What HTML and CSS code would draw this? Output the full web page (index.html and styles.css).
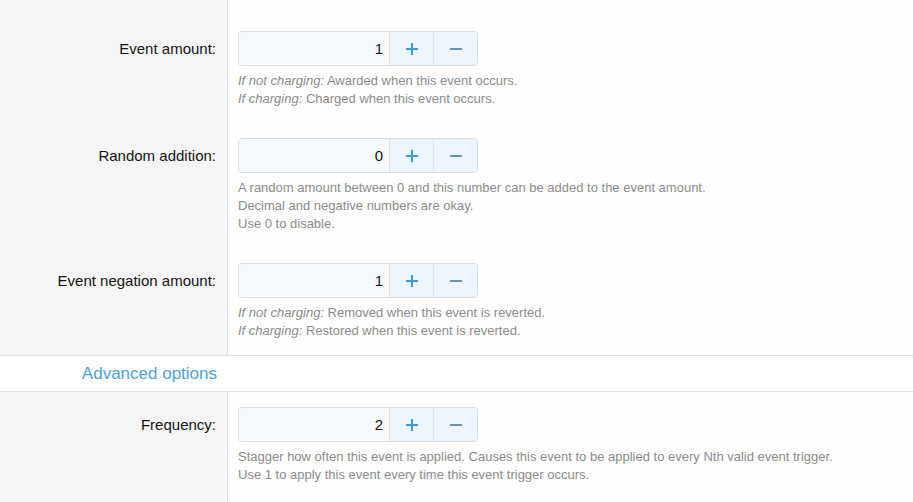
FILE: index.html
```html
<!DOCTYPE html>
<html>
<head>
<meta charset="utf-8">
<link rel="stylesheet" href="styles.css">
</head>
<body>
<div class="form">
  <dl class="form-row form-row--first">
    <dt class="row-label">Event amount:</dt>
    <dd class="row-input">
      <div class="spinbox">
        <input class="spinbox-input" type="text" value="1">
        <button class="spinbox-btn spinbox-btn--up"><svg width="14" height="14" viewBox="0 0 14 14"><path d="M7 1v12M1 7h12" stroke="currentColor" stroke-width="2"/></svg></button>
        <button class="spinbox-btn spinbox-btn--down"><svg width="14" height="14" viewBox="0 0 14 14"><path d="M1 7h12" stroke="currentColor" stroke-width="2"/></svg></button>
      </div>
      <div class="explain"><i>If not charging:</i> Awarded when this event occurs.<br><i>If charging:</i> Charged when this event occurs.</div>
    </dd>
  </dl>
  <dl class="form-row">
    <dt class="row-label">Random addition:</dt>
    <dd class="row-input">
      <div class="spinbox">
        <input class="spinbox-input" type="text" value="0">
        <button class="spinbox-btn spinbox-btn--up"><svg width="14" height="14" viewBox="0 0 14 14"><path d="M7 1v12M1 7h12" stroke="currentColor" stroke-width="2"/></svg></button>
        <button class="spinbox-btn spinbox-btn--down"><svg width="14" height="14" viewBox="0 0 14 14"><path d="M1 7h12" stroke="currentColor" stroke-width="2"/></svg></button>
      </div>
      <div class="explain">A random amount between 0 and this number can be added to the event amount.<br>Decimal and negative numbers are okay.<br>Use 0 to disable.</div>
    </dd>
  </dl>
  <dl class="form-row">
    <dt class="row-label">Event negation amount:</dt>
    <dd class="row-input">
      <div class="spinbox">
        <input class="spinbox-input" type="text" value="1">
        <button class="spinbox-btn spinbox-btn--up"><svg width="14" height="14" viewBox="0 0 14 14"><path d="M7 1v12M1 7h12" stroke="currentColor" stroke-width="2"/></svg></button>
        <button class="spinbox-btn spinbox-btn--down"><svg width="14" height="14" viewBox="0 0 14 14"><path d="M1 7h12" stroke="currentColor" stroke-width="2"/></svg></button>
      </div>
      <div class="explain"><i>If not charging:</i> Removed when this event is reverted.<br><i>If charging:</i> Restored when this event is reverted.</div>
    </dd>
  </dl>
  <div class="form-header">
    <div class="form-header-title">Advanced options</div>
  </div>
  <dl class="form-row form-row--last">
    <dt class="row-label">Frequency:</dt>
    <dd class="row-input">
      <div class="spinbox">
        <input class="spinbox-input" type="text" value="2">
        <button class="spinbox-btn spinbox-btn--up"><svg width="14" height="14" viewBox="0 0 14 14"><path d="M7 1v12M1 7h12" stroke="currentColor" stroke-width="2"/></svg></button>
        <button class="spinbox-btn spinbox-btn--down"><svg width="14" height="14" viewBox="0 0 14 14"><path d="M1 7h12" stroke="currentColor" stroke-width="2"/></svg></button>
      </div>
      <div class="explain">Stagger how often this event is applied. Causes this event to be applied to every Nth valid event trigger.<br>Use 1 to apply this event every time this event trigger occurs.</div>
    </dd>
  </dl>
</div>
</body>
</html>
```

FILE: styles.css
```css
html, body {
  margin: 0;
  padding: 0;
  background: #fefefe;
  font-family: "Liberation Sans", Arial, sans-serif;
  color: #141414;
}

.form {
  display: flex;
  flex-direction: column;
  min-height: 502px;
}

.form-row {
  display: grid;
  grid-template-columns: 228px 1fr;
  margin: 0;
}

.form-row--last {
  flex: 1;
}

.row-label {
  background: #f5f5f5;
  border-right: 1px solid #e2e2e2;
  padding: 22px 11px 15px 0;
  text-align: right;
  font-size: 15px;
  line-height: 21px;
  margin: 0;
}

.row-input {
  margin: 0;
  padding: 15px 10px;
}

.form-row--first .row-label {
  padding-top: 38px;
}

.form-row--first .row-input {
  padding-top: 31px;
}

.spinbox {
  display: flex;
  width: 240px;
  height: 35px;
  box-sizing: border-box;
  border: 1px solid #d8dde2;
  border-radius: 4px;
  overflow: hidden;
  background: #f6fafe;
}

.spinbox-input {
  width: 150px;
  box-sizing: border-box;
  border: 0;
  margin: 0;
  padding: 6px 6px 6px 10px;
  background: #f6fafd;
  font-family: "Liberation Sans", Arial, sans-serif;
  font-size: 15px;
  line-height: 21px;
  color: #141414;
  text-align: right;
  outline: none;
}

.spinbox-btn {
  flex: 1;
  border: 0;
  border-left: 1px solid #dbe3ea;
  margin: 0;
  padding: 0;
  background: #edf5fc;
  display: flex;
  align-items: center;
  justify-content: center;
}

.spinbox-btn--up {
  flex: 0 0 44px;
  color: #3d9bd8;
}

.spinbox-btn--down {
  color: #6394ba;
}

.explain {
  margin-top: 6px;
  font-size: 13px;
  line-height: 18px;
  color: #8c8c8c;
}

.form-header {
  border-top: 1px solid #e2e2e2;
  border-bottom: 1px solid #e2e2e2;
  background: #ffffff;
  display: grid;
  grid-template-columns: 228px 1fr;
}

.form-header-title {
  font-size: 17px;
  line-height: 35px;
  color: #4aa3d8;
  text-align: right;
  padding-right: 11px;
}
```
